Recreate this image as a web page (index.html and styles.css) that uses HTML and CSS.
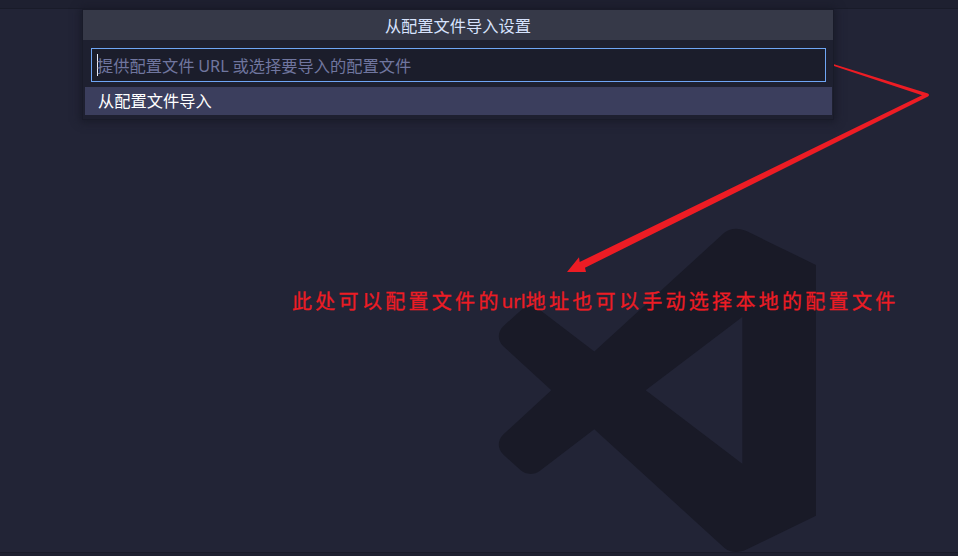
FILE: index.html
```html
<!DOCTYPE html>
<html lang="zh-CN">
<head>
<meta charset="utf-8">
<title>从配置文件导入设置</title>
<link rel="stylesheet" href="styles.css">
</head>
<body>
<div class="workbench">
  <div class="tabbar"></div>
  <svg class="watermark" viewBox="0 0 958 556">
    <path fill-rule="evenodd" d="M724.5 232.5C730 228 739 227.4 747 231.3L816 265V515.7L747 549.3C739 553.3 730 552.7 724.5 548L594.3 429.3L540 470.7C534 475 526 475 520.7 470.3L503.3 454.6C497.3 449 497.3 440 503.3 434.5L551.3 390.3L503.3 346.2C497.3 340.7 497.3 331.7 503.3 326.2L520.7 310.4C526 305.7 534 305.7 540 310L594.3 351.4ZM645.7 390.3L742.3 463.7V317Z"/>
  </svg>
  <section class="picker">
    <h1 class="title">从配置文件导入设置</h1>
    <div class="field"><span class="caret"></span><span class="placeholder">提供配置文件 URL 或选择要导入的配置文件</span></div>
    <div class="option">从配置文件导入</div>
  </section>
  <div class="statusbar"></div>
  <svg class="arrow" viewBox="0 0 958 556">
    <path d="M834 64.3L928 93.5Q930 95 928 96.5L585 267.8L586 272L567 272L579 257.3L579.7 262L922 95.3L834 65.9Z"/>
  </svg>
  <div class="note"><span>此处可以配置文件的</span><span class="latin">url</span><span>地址也可以手动选择本地的配置文件</span></div>
</div>
</body>
</html>
```
FILE: styles.css
```css
* { box-sizing: border-box; }
body {
  margin: 0;
  background: #222436;
  font-family: "Noto Sans", "Noto Sans CJK SC", sans-serif;
}
.workbench {
  position: relative;
  width: 958px;
  height: 556px;
  overflow: hidden;
  display: flex;
  flex-direction: column;
}
.tabbar {
  height: 9px;
  background: #1e2030;
  border-bottom: 1px solid #191b29;
}
.statusbar {
  height: 4px;
  margin-top: auto;
  background: #1e2030;
  border-top: 1px solid #191b29;
}
.watermark, .arrow {
  position: absolute;
  left: 0;
  top: 0;
  width: 958px;
  height: 556px;
}
.watermark { fill: #191a27; }
.arrow { fill: #ed1c24; }
.picker {
  position: absolute;
  left: 82px;
  top: 9px;
  width: 752px;
  height: 111px;
  border: 1px solid #191b29;
  background: #1e2030;
  box-shadow: 0 0 8px 2px #191b29;
}
.title {
  margin: 0;
  height: 30px;
  line-height: 32px;
  background: #363948;
  color: #d6e2fc;
  font-size: 16.25px;
  font-weight: 400;
  text-align: center;
}
.field {
  display: flex;
  align-items: center;
  width: 735px;
  height: 34px;
  margin: 8px 0 5px 8px;
  padding-left: 5px;
  border: 1px solid #6fa6f5;
  background: #1b1d2b;
  color: #70769f;
  font-size: 16.25px;
}
.caret {
  width: 1px;
  height: 22px;
  background: #e8ecfa;
}
.placeholder {
  margin: 2px 0 0 -1px;
  line-height: 30px;
  white-space: nowrap;
  word-spacing: -0.5px;
}
.option {
  width: 747px;
  height: 28px;
  margin-left: 2px;
  padding-left: 13px;
  background: #3b3e5d;
  color: #fff;
  font-size: 16.25px;
  line-height: 28px;
}
.note {
  position: absolute;
  left: 292px;
  top: 285px;
  display: flex;
  align-items: center;
  height: 30px;
  color: #ed1c24;
  font-size: 20px;
  letter-spacing: 3.3px;
  white-space: nowrap;
  -webkit-text-stroke: 0.3px #ed1c24;
}
.latin {
  width: 24px;
  font-size: 18.5px;
  letter-spacing: 0;
}
```
